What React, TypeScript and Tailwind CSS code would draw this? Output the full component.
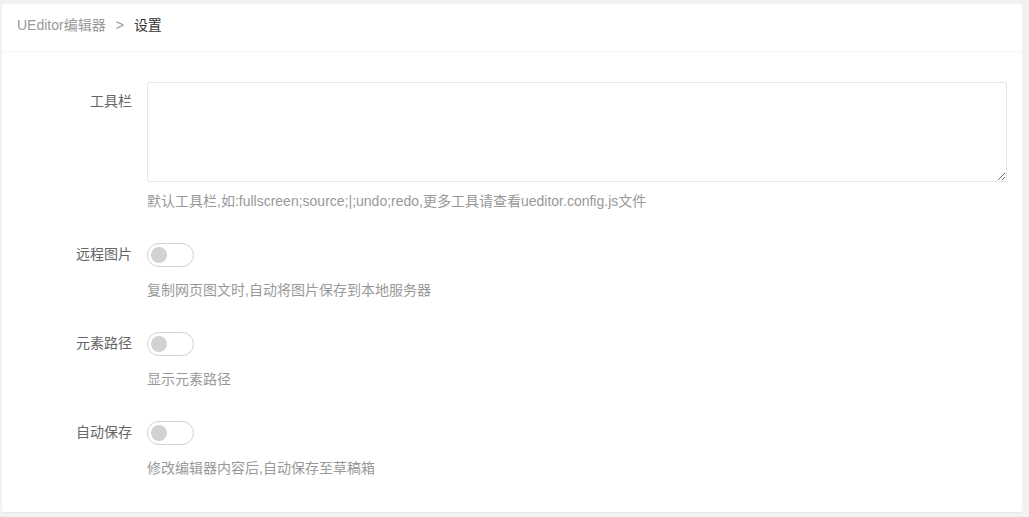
import React from "react";

const font = {
  fontFamily: '"Liberation Sans", "Noto Sans CJK SC", sans-serif',
};

function Switch() {
  return (
    <div className="flex h-[24px] w-[47px] items-center rounded-[20px] border border-[#d2d2d2] bg-white pl-[3px]">
      <div className="h-[16px] w-[16px] rounded-full bg-[#d2d2d2]" />
    </div>
  );
}

function Item({
  label,
  children,
  help,
  switchRow,
}: {
  label: string;
  children: React.ReactNode;
  help: string;
  switchRow?: boolean;
}) {
  return (
    <div className="mb-[15px] flex">
      <label className="w-[130px] shrink-0 pr-[15px] py-[9px] text-right leading-[20px] text-[#666]">
        {label}
      </label>
      <div className="flex-1">
        <div className={switchRow ? "h-[36px] pt-[8px]" : ""}>{children}</div>
        <div className="py-[9px] leading-[20px] text-[#999]">{help}</div>
      </div>
    </div>
  );
}

export default function App() {
  return (
    <div
      className="min-h-[517px] bg-[#f2f2f2] pl-[2px] pr-[7px] pt-[4px] pb-[5px] text-[14px]"
      style={font}
    >
      <div className="rounded-[2px] bg-white shadow-[0_1px_2px_rgba(0,0,0,0.05)]">
        <div className="flex h-[48px] items-center gap-[10px] border-b border-[#f6f6f6] px-[15px] pb-[4px]">
          <span className="text-[#999]">UEditor编辑器</span>
          <span className="text-[#999]">&gt;</span>
          <span className="text-[#333]">设置</span>
        </div>
        <div className="px-[15px] pt-[30px] pb-[10px]">
          <Item
            label="工具栏"
            help="默认工具栏,如:fullscreen;source;|;undo;redo,更多工具请查看ueditor.config.js文件"
          >
            <textarea className="block h-[100px] min-h-[100px] w-full resize-y rounded-[2px] border border-[#e6e6e6] bg-white px-[10px] py-[6px] leading-[20px] outline-none" />
          </Item>
          <Item switchRow label="远程图片" help="复制网页图文时,自动将图片保存到本地服务器">
            <Switch />
          </Item>
          <Item switchRow label="元素路径" help="显示元素路径">
            <Switch />
          </Item>
          <Item switchRow label="自动保存" help="修改编辑器内容后,自动保存至草稿箱">
            <Switch />
          </Item>
        </div>
      </div>
    </div>
  );
}
